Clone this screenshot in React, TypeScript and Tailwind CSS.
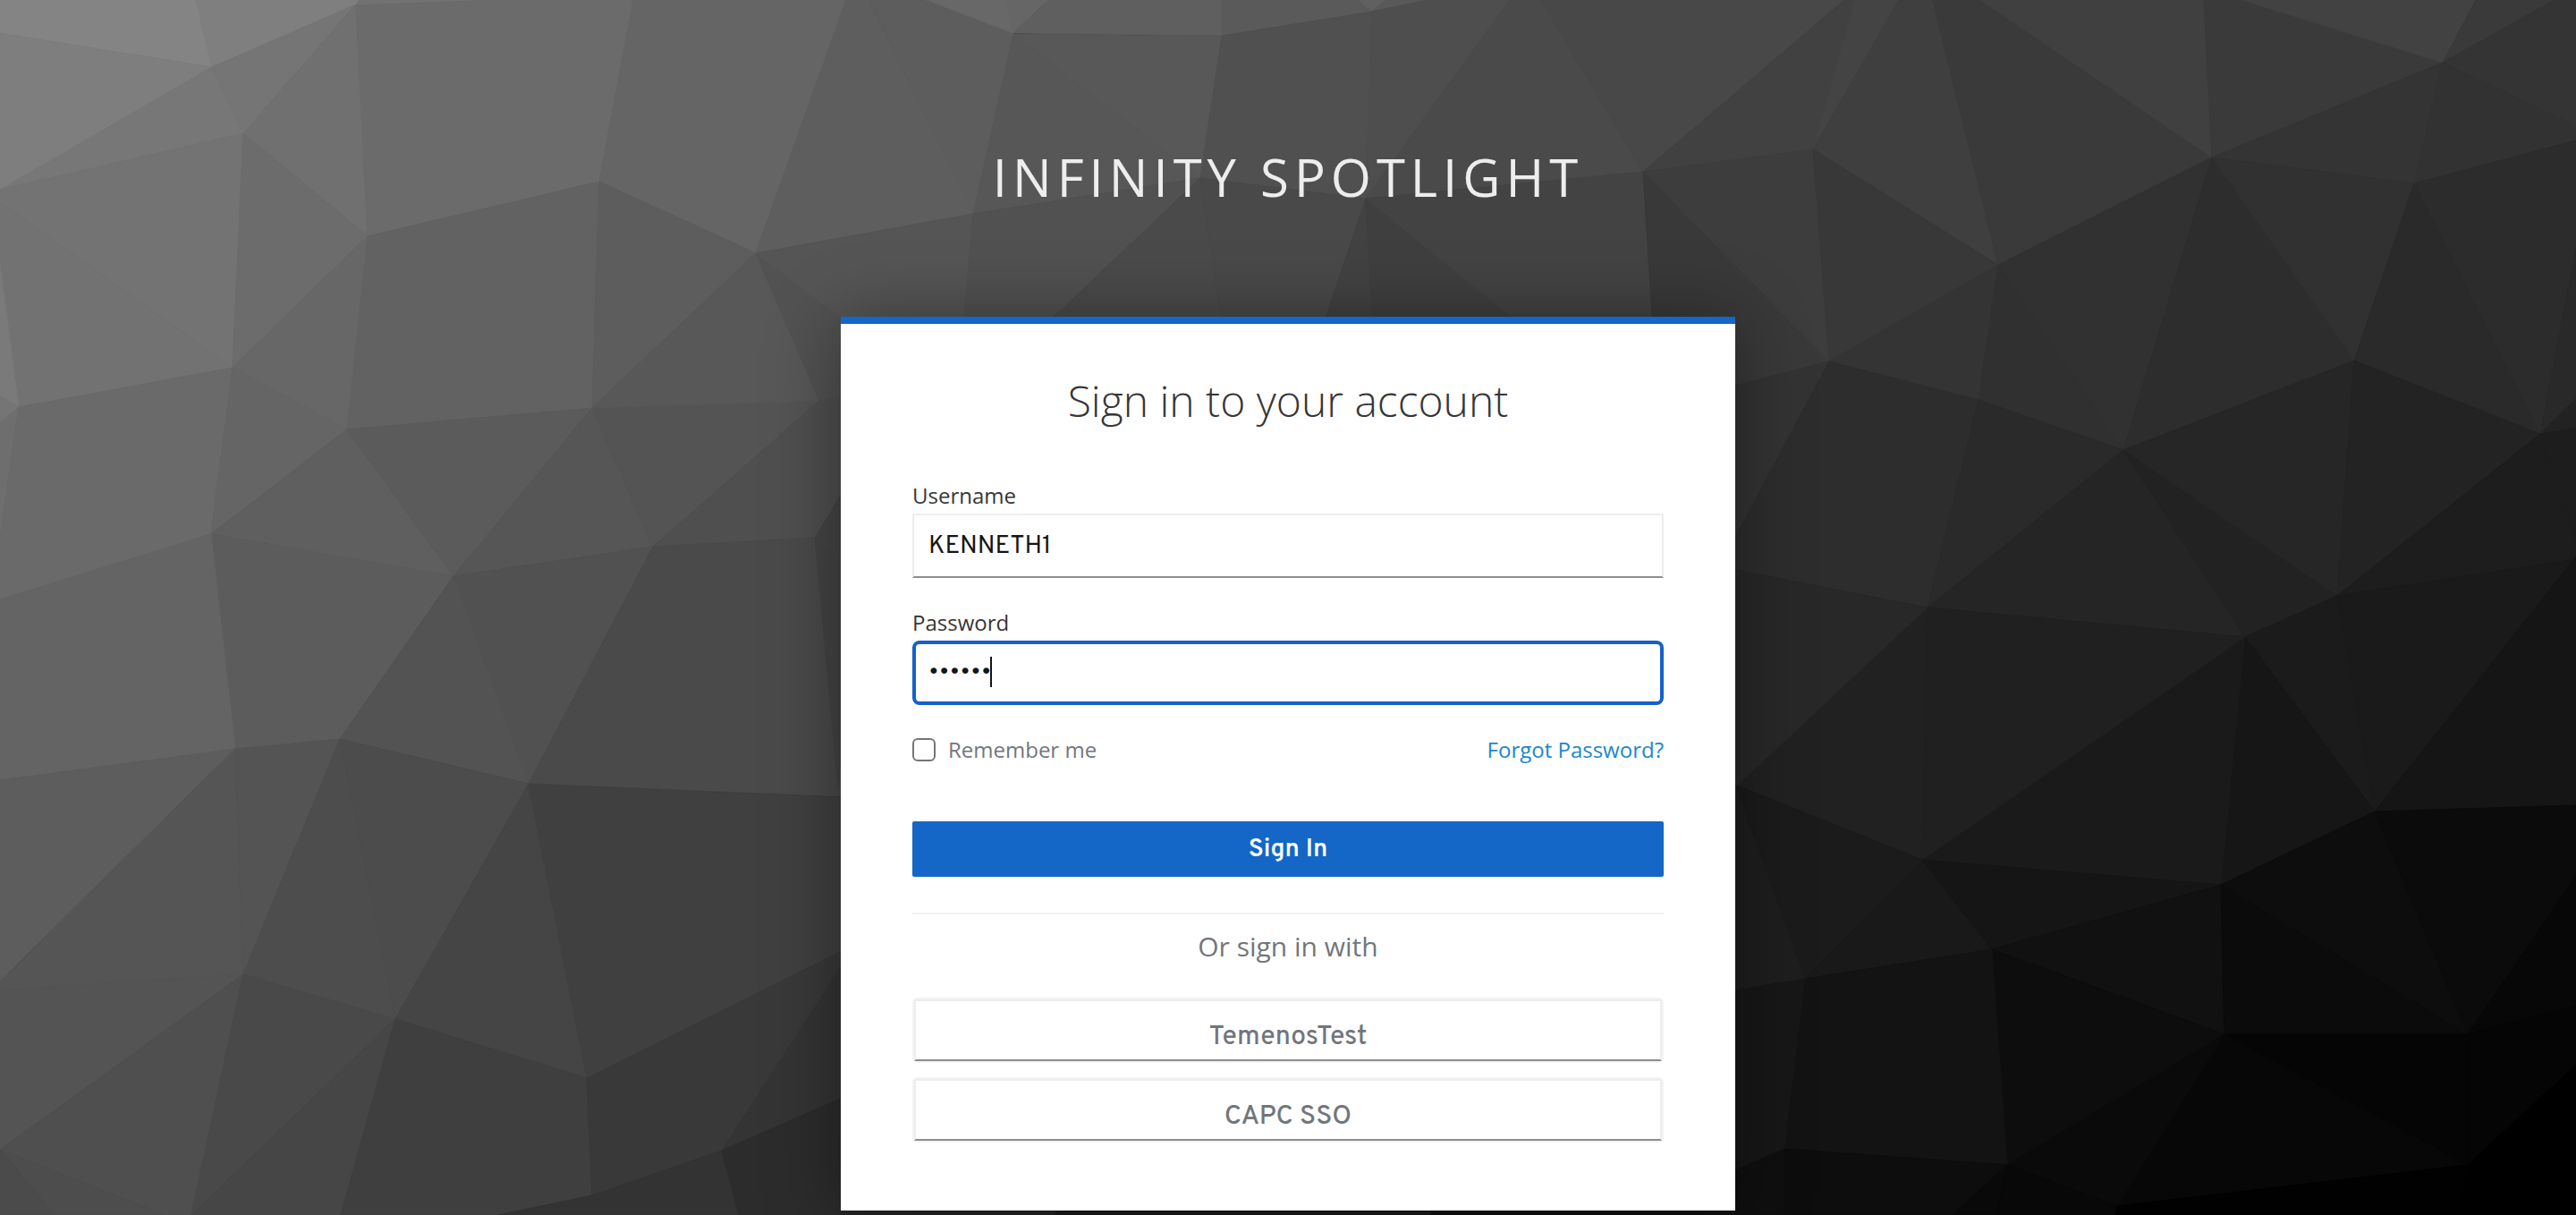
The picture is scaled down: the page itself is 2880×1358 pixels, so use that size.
import { useState } from "react";

// Facets of the low-poly backdrop: [fill, polygon points].
const FACETS: [string, string][] = [
  ["#848484", "0,0 219,0 237,75 0,37"],
  ["#7f7f7f", "219,0 402,0 398,5 237,75"],
  ["#7e7e7e", "0,37 237,75 0,213"],
  ["#777777", "237,75 272,149 0,212"],
  ["#757575", "237,75 398,5 272,149"],
  ["#707070", "398,5 411,264 272,149"],
  ["#727272", "402,0 553,0 398,6"],
  ["#6b6b6b", "398,6 553,0 708,0 670,203 411,264"],
  ["#656565", "708,0 946,0 845,283 670,203"],
  ["#737373", "0,212 272,149 260,411 0,226"],
  ["#727272", "0,226 260,411 21,455 0,295"],
  ["#6c6c6c", "272,149 411,264 260,411"],
  ["#676767", "411,264 388,480 260,411"],
  ["#626262", "411,264 670,203 662,456 388,480"],
  ["#5d5d5d", "670,203 845,283 662,456"],
  ["#7a7a7a", "0,295 21,455 0,443"],
  ["#757575", "0,443 21,455 0,473"],
  ["#6e6e6e", "0,473 21,455 0,603"],
  ["#6a6a6a", "21,455 260,411 236,597 0,670 0,603"],
  ["#656565", "260,411 388,480 236,597"],
  ["#5f5f5f", "388,480 507,644 236,597"],
  ["#5b5b5b", "388,480 662,456 507,644"],
  ["#565656", "662,456 730,611 507,644"],
  ["#545454", "662,456 916,448 730,611"],
  ["#585858", "845,283 916,448 662,456"],
  ["#525252", "845,283 1000,395 1000,440 916,448"],
  ["#5e5e5e", "946,0 972,0 1088,239 845,283"],
  ["#5d5d5d", "972,0 1036,0 1133,37 1088,239"],
  ["#555555", "845,283 1088,239 1074,400 1000,400"],
  ["#4f4f4f", "916,448 960,440 960,520 911,601 730,611"],
  ["#5c5c5c", "236,597 507,644 380,826 263,837"],
  ["#646464", "0,670 236,597 263,837 0,872"],
  ["#515151", "507,644 730,611 591,876"],
  ["#535353", "507,644 591,876 380,826"],
  ["#4a4a4a", "730,611 911,601 960,640 960,891 591,876"],
  ["#454545", "911,601 960,520 960,640"],
  ["#444444", "911,601 960,640 937,880"],
  ["#5d5d5d", "0,872 263,837 0,1097"],
  ["#555555", "263,837 272,1089 0,1107 0,1097"],
  ["#545454", "263,837 380,826 272,1089"],
  ["#4d4d4d", "380,826 442,1139 272,1089"],
  ["#4c4c4c", "380,826 591,876 442,1139"],
  ["#454545", "591,876 656,1205 442,1139"],
  ["#404040", "591,876 960,892 960,1054 656,1205"],
  ["#545454", "0,1107 272,1089 0,1285"],
  ["#4f4f4f", "272,1089 214,1358 184,1358 0,1285"],
  ["#494949", "272,1089 442,1139 214,1358"],
  ["#464646", "442,1139 381,1358 214,1358"],
  ["#3f3f3f", "442,1139 656,1205 662,1336 557,1358 381,1358"],
  ["#393939", "656,1205 960,1054 807,1286 662,1336"],
  ["#343434", "960,1050 960,1219 807,1286"],
  ["#333333", "557,1358 662,1336 807,1286 826,1358"],
  ["#2c2c2c", "807,1286 960,1219 960,1358 826,1358"],
  ["#4d4d4d", "0,1285 184,1358 61,1358"],
  ["#4b4b4b", "0,1285 61,1358 0,1358"],
  ["#262626", "940,1340 1188,1340 1180,1358 940,1358"],
  ["#1c1c1c", "1188,1340 1600,1340 1600,1358 1180,1358"],
  ["#121212", "1600,1340 1945,1340 1945,1358 1600,1358"],
  ["#686868", "1036,0 1125,0 1133,37"],
  ["#666666", "1125,0 1172,0 1133,37"],
  ["#5f5f5f", "1172,0 1366,0 1366,40 1133,37"],
  ["#575757", "1133,38 1342,199 1088,239"],
  ["#585858", "1133,38 1366,40 1342,199"],
  ["#5a5a5a", "1366,0 1519,0 1534,13 1366,40"],
  ["#606060", "1519,0 1549,0 1534,13"],
  ["#595959", "1549,0 1595,0 1534,13"],
  ["#505050", "1366,40 1534,13 1527,222 1342,199"],
  ["#4e4e4e", "1534,13 1595,0 1688,0 1527,222"],
  ["#4a4a4a", "1688,0 1723,0 1837,192 1527,222"],
  ["#484848", "1723,0 2062,0 1837,192"],
  ["#414141", "2062,0 2074,0 2027,167 1837,192"],
  ["#444444", "2074,0 2123,0 2027,167"],
  ["#3f3f3f", "2123,0 2161,0 2234,296 2027,167"],
  ["#3a3a3a", "2161,0 2214,0 2473,176 2234,296"],
  ["#404040", "2214,0 2464,0 2473,176"],
  ["#3a3a3a", "2464,0 2506,0 2731,70 2473,176"],
  ["#424242", "2506,0 2768,0 2731,70"],
  ["#3a3a3a", "2768,0 2856,0 2731,70"],
  ["#343434", "2856,0 2880,0 2880,141 2731,70"],
  ["#343434", "2731,70 2699,205 2473,176"],
  ["#323232", "2731,70 2880,141 2880,157 2699,205"],
  ["#515151", "1088,239 1342,199 1130,400 1074,400"],
  ["#4a4a4a", "1342,199 1372,400 1130,400"],
  ["#494949", "1342,199 1527,222 1467,400 1372,400"],
  ["#424242", "1527,222 1537,400 1467,400"],
  ["#3f3f3f", "1527,222 1745,400 1537,400"],
  ["#434343", "1527,222 1837,192 1850,400 1745,400"],
  ["#393939", "1837,192 2045,404 1940,440 1850,400"],
  ["#3d3d3d", "1837,192 2027,167 2045,404"],
  ["#383838", "2027,167 2234,296 2045,404"],
  ["#343434", "2234,296 2212,447 2045,404"],
  ["#303030", "2234,296 2374,503 2212,447"],
  ["#313131", "2234,296 2473,176 2374,503"],
  ["#2d2d2d", "2473,176 2632,403 2374,503"],
  ["#313131", "2473,176 2699,205 2632,403"],
  ["#2a2a2a", "2699,205 2840,485 2632,403"],
  ["#2c2c2c", "2699,205 2880,157 2880,278 2840,485"],
  ["#292929", "2880,278 2880,446 2840,485"],
  ["#222222", "2880,446 2880,479 2840,485"],
  ["#333333", "2045,404 1940,601 1940,431"],
  ["#2d2d2d", "2045,404 2212,447 2155,679 1940,637 1940,601"],
  ["#2a2a2a", "2212,447 2374,503 2155,679"],
  ["#252525", "2374,503 2155,679 2510,712"],
  ["#222222", "2374,503 2613,666 2510,712"],
  ["#262626", "2374,503 2632,403 2613,666"],
  ["#232323", "2632,403 2840,485 2613,666"],
  ["#1d1d1d", "2840,485 2880,601 2880,625 2613,666"],
  ["#1d1d1d", "2840,485 2880,479 2880,601"],
  ["#1a1a1a", "2613,666 2880,625 2880,633 2655,907"],
  ["#151515", "2880,622 2880,900 2655,907"],
  ["#1b1b1b", "2510,712 2613,666 2655,907"],
  ["#161616", "2510,712 2655,907 2483,989"],
  ["#1a1a1a", "2510,712 2483,989 2149,961"],
  ["#202020", "2155,679 2510,712 2149,961"],
  ["#212121", "2155,679 2149,961 1942,878"],
  ["#282828", "1940,637 2155,679 1940,880"],
  ["#1b1b1b", "1942,878 2149,961 2018,1094"],
  ["#1e1e1e", "1940,878 2018,1094 1940,1107"],
  ["#191919", "2149,961 2227,1061 2018,1094"],
  ["#151515", "2149,961 2483,989 2227,1061"],
  ["#111111", "2483,989 2487,1156 2227,1061"],
  ["#0b0b0b", "2483,989 2759,1156 2487,1156"],
  ["#0d0d0d", "2483,989 2655,907 2759,1156"],
  ["#0b0b0b", "2655,907 2880,900 2880,979 2759,1156"],
  ["#070707", "2880,979 2880,1125 2759,1156"],
  ["#050505", "2759,1156 2880,1125 2880,1190 2759,1302"],
  ["#000000", "2880,1190 2880,1358 2750,1358 2759,1302"],
  ["#050505", "2487,1156 2759,1156 2759,1302"],
  ["#070707", "2487,1156 2759,1302 2367,1348"],
  ["#0a0a0a", "2487,1156 2244,1302 2367,1348"],
  ["#0d0d0d", "2227,1061 2487,1156 2244,1302"],
  ["#131313", "2018,1094 2227,1061 2244,1302 1995,1284"],
  ["#171717", "1940,1107 2018,1094 1995,1284 1940,1308"],
  ["#0f0f0f", "1940,1308 1995,1284 1995,1358 1940,1358"],
  ["#0d0d0d", "1995,1284 2244,1302 2183,1358 1995,1358"],
  ["#090909", "2244,1302 2233,1358 2183,1358"],
  ["#080808", "2244,1302 2367,1348 2365,1358 2233,1358"],
  ["#010101", "2367,1348 2759,1302 2750,1358 2365,1358"],
];

function Backdrop() {
  return (
    <svg
      className="absolute inset-0 h-full w-full"
      viewBox="0 0 2880 1358"
      preserveAspectRatio="xMidYMid slice"
      aria-hidden="true"
    >
      {FACETS.map(([fill, points]) => (
        <polygon key={points} points={points} fill={fill} stroke={fill} strokeWidth="1" />
      ))}
    </svg>
  );
}

function ProviderLink({ name }: { name: string }) {
  return (
    <a href="#" className="block rounded-md border-2 border-[#f3f3f3] text-[#72767b]">
      <span className="flex h-[69px] items-end justify-center border-2 border-[#ededed] border-b-[#8b8d8f] pb-0.5 text-[30px] leading-[44px] font-medium font-['Overpass','Open_Sans',sans-serif]">
        {name}
      </span>
    </a>
  );
}

export default function App() {
  const [username, setUsername] = useState("KENNETH1");
  const [password, setPassword] = useState("secret");
  const [remember, setRemember] = useState(false);

  return (
    <div className="relative min-h-screen overflow-hidden bg-[#1c1c1c] font-['Open_Sans',sans-serif]">
      <Backdrop />
      <div className="relative mx-auto flex w-full max-w-[1000px] flex-col pb-[5px]">
        <header className="pt-[158px] pb-[116px] text-center text-[58px] leading-[80px] tracking-[6px] text-[#ededed] uppercase">
          Infinity Spotlight
        </header>
        <main className="border-t-8 border-[#1467c6] bg-white px-20 pt-[46px] pb-[76px] shadow-[0_6px_76px_rgba(0,0,0,0.4)]">
          <h1 className="text-center text-[48px] leading-[80px] font-light text-[#363636]">
            Sign in to your account
          </h1>
          <form onSubmit={(e) => e.preventDefault()} className="mt-[46px] flex flex-col">
            <label htmlFor="username" className="text-[24px] leading-10 text-[#363636]">
              Username
            </label>
            <input
              id="username"
              type="text"
              value={username}
              onChange={(e) => setUsername(e.target.value)}
              className="h-[72px] border-2 border-[#ededed] border-b-[#8a8d90] bg-white px-4 pt-0.5 text-[28px] text-[#151515] outline-none font-['Overpass','Open_Sans',sans-serif]"
            />
            <label htmlFor="password" className="mt-[30px] text-[24px] leading-10 text-[#363636]">
              Password
            </label>
            <div className="relative">
              <input
                id="password"
                type="password"
                value={password}
                onChange={(e) => setPassword(e.target.value)}
                className="block h-[72px] w-full rounded-lg border-4 border-[#1560cb] bg-white px-3.5 pt-0.5 text-[28px] text-[#151515] caret-transparent outline-none font-['Overpass','Open_Sans',sans-serif]"
              />
              <span className="absolute top-[18px] left-[87px] h-[34px] w-0.5 bg-[#151515]" />
            </div>
            <div className="mt-[30px] flex items-center justify-between text-[24px] leading-10">
              <label className="flex items-center gap-3.5 text-[#72767b]">
                <input
                  type="checkbox"
                  checked={remember}
                  onChange={(e) => setRemember(e.target.checked)}
                  className="size-[26px] appearance-none rounded-md border-2 border-[#767676] bg-white checked:bg-[#1467c6]"
                />
                Remember me
              </label>
              <a href="#" className="text-[#1b88ca]">
                Forgot Password?
              </a>
            </div>
            <button
              type="submit"
              className="mt-[60px] h-[62px] rounded-xs bg-[#1467c6] pt-0.5 text-[28px] font-semibold text-white font-['Overpass','Open_Sans',sans-serif]"
            >
              Sign In
            </button>
          </form>
          <section className="mt-10 border-t-2 border-[#f1f1f1] pt-3.5">
            <h2 className="text-center text-[30px] leading-[44px] text-[#72767b]">Or sign in with</h2>
            <div className="mt-[35px] flex flex-col gap-4">
              <ProviderLink name="TemenosTest" />
              <ProviderLink name="CAPC SSO" />
            </div>
          </section>
        </main>
      </div>
    </div>
  );
}
